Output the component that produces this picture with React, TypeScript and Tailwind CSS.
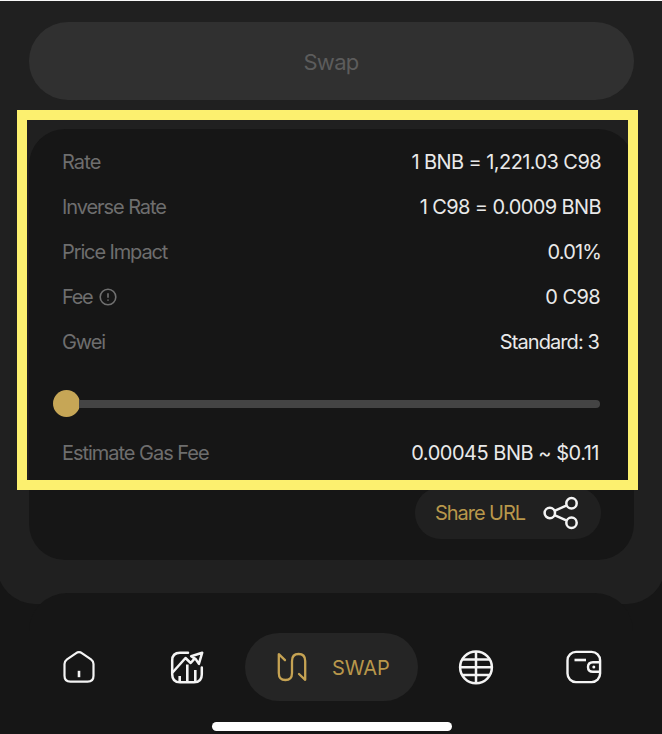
import type { ReactNode } from "react";

type RowProps = { label: ReactNode; value: string; tracking: string; labelTracking: string };

function Row({ label, value, tracking, labelTracking }: RowProps) {
  return (
    <div className="flex h-[45px] items-center justify-between">
      <span className={`flex items-center text-[#6e6e6e] ${labelTracking}`}>{label}</span>
      <span className={`text-[#e9e9e9] ${tracking}`}>{value}</span>
    </div>
  );
}

function InfoIcon() {
  return (
    <svg className="ml-[7px] size-[18px]" viewBox="0 0 18 18" fill="none" stroke="#707070" strokeWidth="1.6">
      <circle cx="9" cy="9" r="7.8" />
      <path d="M9 5.2v4.6M9 11.5v1.3" />
    </svg>
  );
}

function ShareIcon() {
  return (
    <svg className="h-[34px] w-[36px]" viewBox="0 0 36 34" fill="none" stroke="#f4f4f4" strokeWidth="2.5">
      <circle cx="6.8" cy="17" r="5.2" />
      <circle cx="28.5" cy="7.2" r="5.2" />
      <circle cx="28.5" cy="26.7" r="5.2" />
      <path d="M11.5 14.8 23.8 9.3M11.5 19.2l12.3 5.4" />
    </svg>
  );
}

function HomeIcon() {
  return (
    <svg className="h-[34px] w-[32px]" viewBox="0 0 32 34" fill="none" stroke="#f4f4f4" strokeWidth="2.2" strokeLinejoin="round">
      <path d="M12.8 3.3 4 9.4Q1.5 11.2 1.5 14.1v11.7q0 5.9 5.9 5.9h17.2q5.9 0 5.9-5.9V14.1q0-2.9-2.5-4.7l-8.8-6.1q-3.2-2.2-6.4 0Z" />
      <path d="M16 20.8v6.4" strokeWidth="2.6" />
    </svg>
  );
}

function ChartIcon() {
  return (
    <svg className="size-[34px]" viewBox="0 0 34 34" fill="none" stroke="#f4f4f4" strokeWidth="2.5" strokeLinejoin="round" strokeLinecap="round">
      <path d="M18 2.7H10Q2.2 2.7 2.2 10.5v14q0 7.8 7.8 7.8h14q7.8 0 7.8-7.8v-7" />
      <path d="m3 22 12.5-14 5.2 5 3.4-3.8" />
      <path d="m21.2 6.2 11-3.5-3.3 11.2-3.2-4.8Z" />
      <path d="M9.7 26v5.5M17.3 14.5v17M25.3 20v11.5" strokeLinecap="butt" strokeWidth="2.6" />
    </svg>
  );
}

function SwapIcon() {
  return (
    <svg className="size-[30px]" viewBox="0 0 30 30" fill="none" stroke="#c6a353" strokeWidth="2.3" strokeLinejoin="round" strokeLinecap="round">
      <path d="m8 8.2-6.2-6V21q0 7 6.6 7t6.6-7V9q0-7 6.6-7t6.6 7v18.8L22 22" />
    </svg>
  );
}

function GlobeIcon() {
  return (
    <svg className="size-[36px]" viewBox="0 0 36 36" fill="none" stroke="#f4f4f4" strokeWidth="2.5">
      <circle cx="18" cy="18.3" r="15.9" />
      <path d="M18 2.3v32M4 10.5h28M2 18.3h32M4 26.1h28" />
    </svg>
  );
}

function WalletIcon() {
  return (
    <svg className="h-[34px] w-[36px]" viewBox="0 0 36 34" fill="none" stroke="#f4f4f4" strokeWidth="2.4">
      <rect x="1.5" y="1.9" width="32.6" height="30.2" rx="8.5" />
      <path d="M8.5 10h11.5" strokeWidth="2.6" />
      <path d="M34.1 12.2h-7.2q-4.9 0-4.9 4.8t4.9 4.8h7.2" />
      <circle cx="27.8" cy="17" r="1.5" fill="#f4f4f4" stroke="none" />
    </svg>
  );
}

export default function App() {
  return (
    <div className="flex h-[734px] w-[662px] flex-col overflow-hidden bg-[#161616] font-['Inter',sans-serif] text-[20px] leading-none">
      <main className="relative -mx-[3px] h-[604px] shrink-0 rounded-b-[38px] border-t border-[#f8f8f8] bg-[#202020] pl-[32px] pr-[31px] pt-[21px]">
        <button className="flex h-[78px] w-full items-center justify-center rounded-full bg-[#303030] pr-px pt-px text-[22px] tracking-[-0.7px] text-[#5c5c5c]">
          Swap
        </button>
        <section className="mt-[29px] h-[431px] rounded-[36px] bg-[#161616] pl-[33px] pr-[33px] pt-[10px]">
          <Row label="Rate" value="1 BNB = 1,221.03 C98" labelTracking="tracking-[-0.9px]" tracking="tracking-[-0.58px]" />
          <Row label="Inverse Rate" value="1 C98 = 0.0009 BNB" labelTracking="tracking-[-1.08px]" tracking="tracking-[-0.6px]" />
          <Row label="Price Impact" value="0.01%" labelTracking="tracking-[-1.12px]" tracking="tracking-[-0.85px]" />
          <Row label={<>Fee<InfoIcon /></>} value="0 C98" labelTracking="tracking-[-1.3px]" tracking="tracking-[-0.6px] mr-px" />
          <Row label="Gwei" value="Standard: 3" labelTracking="tracking-[-1.1px]" tracking="tracking-[-0.9px] mr-[2px]" />
          <div className="-ml-[9px] mr-px mt-[26px] flex h-[27px] items-center">
            <span className="size-[27px] rounded-full bg-[#c6a656]" />
            <span className="-ml-px h-[8px] flex-1 rounded-r-full bg-[#444444]" />
          </div>
          <div className="mt-[13px]">
            <Row label="Estimate Gas Fee" value="0.00045 BNB ~ $0.11" labelTracking="tracking-[-1.03px]" tracking="tracking-[-0.48px] mr-[2px]" />
          </div>
          <div className="mt-[12px] flex justify-end">
            <button className="flex h-[52px] w-[186px] items-center justify-between rounded-full bg-[#202020] pl-[20px] pr-[22px] tracking-[-1.05px] text-[#b8974b]">
              <span>Share URL</span>
              <ShareIcon />
            </button>
          </div>
        </section>
        <div className="pointer-events-none absolute left-[20px] top-[109px] h-[380px] w-[621px] border-[10px] border-[#fcf06f]" />
      </main>
      <footer className="relative mx-auto -mt-[11px] flex h-[141px] w-[604px] shrink-0 flex-col rounded-t-[38px] bg-[#161616] pt-[40px]">
        <nav className="flex h-[68px] items-center pl-[34px]">
          <HomeIcon />
          <span className="ml-[75px]"><ChartIcon /></span>
          <div className="ml-[41px] flex h-[68px] w-[173px] items-center rounded-full bg-[#252525] pl-[32px] text-[#b8974b]">
            <SwapIcon />
            <span className="ml-[25px] pt-px tracking-[-0.1px]">SWAP</span>
          </div>
          <span className="ml-[40px]"><GlobeIcon /></span>
          <span className="ml-[72px]"><WalletIcon /></span>
        </nav>
        <div className="ml-[183px] mt-[21px] h-[9px] w-[240px] rounded-full bg-white" />
      </footer>
    </div>
  );
}
